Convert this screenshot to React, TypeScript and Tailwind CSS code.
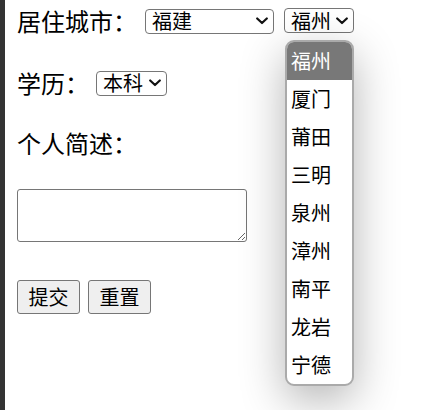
import { useState } from "react";

const cities = ["福州", "厦门", "莆田", "三明", "泉州", "漳州", "南平", "龙岩", "宁德"];

function Chevron() {
  return (
    <svg width="12" height="8" viewBox="0 0 12 8" className="pointer-events-none absolute right-[6px] top-1/2 -translate-y-1/2">
      <path d="M1.2 1.5 L6 6 L10.8 1.5" fill="none" stroke="#111" strokeWidth="2.2" strokeLinecap="round" strokeLinejoin="round" />
    </svg>
  );
}

function Select({ value, options, width }: { value: string; options: string[]; width: string }) {
  const [v, setV] = useState(value);
  return (
    <span className={`relative inline-flex h-[25px] ${width}`}>
      <select
        value={v}
        onChange={(e) => setV(e.target.value)}
        className="h-full w-full appearance-none rounded-[4px] border border-[#767676] bg-white pl-[6px] pr-[20px] text-[20px] leading-none text-black outline-none"
      >
        {options.map((o) => (
          <option key={o} value={o}>{o}</option>
        ))}
      </select>
      <Chevron />
    </span>
  );
}

export default function App() {
  return (
    <div className="flex h-[410px] w-[427px] overflow-hidden bg-white text-black [font-family:'Noto_Sans_CJK_SC','Noto_Sans',sans-serif]">
      <div className="h-full w-[5px] shrink-0 bg-[#333333]" />

      <div className="relative flex flex-1 flex-col pl-[12px]">
        {/* 居住城市 */}
        <div className="mt-[4px] flex h-[34px] items-center">
          <span className="w-[128px] text-[24px] leading-none">居住城市：</span>
          <Select value="福建" options={["福建", "浙江", "广东"]} width="w-[129px]" />
          <span className="ml-[10px]">
            <Select value="福州" options={cities} width="w-[70px]" />
          </span>
        </div>

        {/* 学历 */}
        <div className="mt-[28px] flex h-[34px] items-center">
          <span className="w-[79px] text-[24px] leading-none">学历：</span>
          <Select value="本科" options={["本科", "硕士", "博士"]} width="w-[71px]" />
        </div>

        {/* 个人简述 */}
        <div className="mt-[26px] flex h-[34px] items-center">
          <span className="text-[24px] leading-none">个人简述：</span>
        </div>

        <textarea className="mt-[29px] h-[53px] w-[230px] resize rounded-[3px] border border-[#767676] bg-white text-[20px] outline-none" />

        <div className="mt-[38px] flex gap-[8px]">
          <button type="submit" className="h-[34px] w-[63px] rounded-[3px] border border-[#767676] bg-[#efefef] text-[20px] leading-none">提交</button>
          <button type="reset" className="h-[34px] w-[63px] rounded-[3px] border border-[#767676] bg-[#efefef] text-[20px] leading-none">重置</button>
        </div>

        {/* open dropdown of 城市 select */}
        <div className="absolute left-[280px] top-[40px] w-[69px] overflow-hidden rounded-[9px] border-2 border-[#aaaaaa] bg-white shadow-[0_14px_45px_rgba(0,0,0,0.3)]">
          {cities.map((c, i) => (
            <div
              key={c}
              className={`flex h-[38px] items-center pl-[4px] text-[20px] leading-none ${i === 0 ? "bg-[#787878] text-white" : "text-black"}`}
            >
              {c}
            </div>
          ))}
        </div>
      </div>
    </div>
  );
}
